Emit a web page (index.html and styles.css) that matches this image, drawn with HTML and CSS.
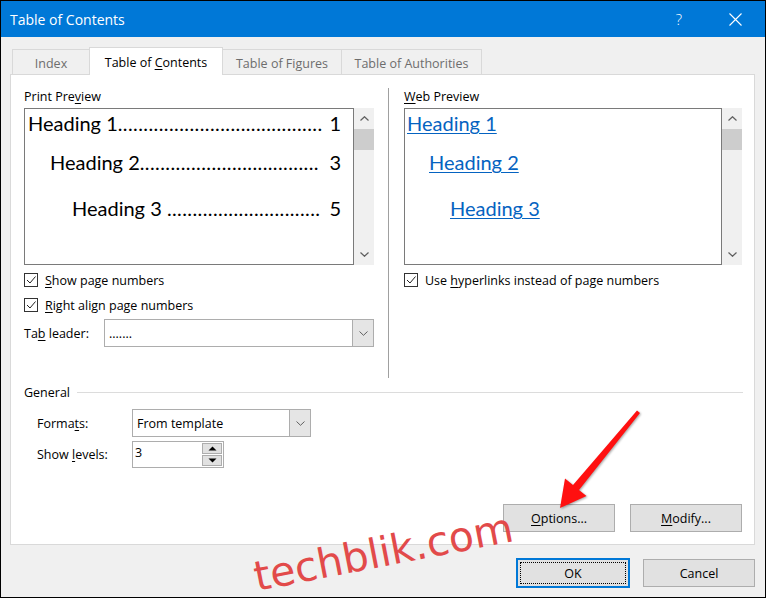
FILE: index.html
```html
<!DOCTYPE html>
<html>
<head>
<meta charset="utf-8">
<title>Table of Contents</title>
<link rel="stylesheet" href="styles.css">
</head>
<body>
<div class="window">
  <div class="titlebar">
    <span class="title">Table of Contents</span>
    <span class="help">?</span>
    <svg class="close" width="13" height="13" viewBox="0 0 13 13"><path d="M0.5 0.5 L12.5 12.5 M12.5 0.5 L0.5 12.5" stroke="#fff" stroke-width="1.1" fill="none"/></svg>
  </div>
  <div class="body">
    <div class="tabs">
      <div class="tab t-index"><span>Index</span></div>
      <div class="tab t-toc active"><span>Table of <u>C</u>ontents</span></div>
      <div class="tab t-fig"><span>Table of Figures</span></div>
      <div class="tab t-auth"><span>Table of Authorities</span></div>
    </div>
    <div class="panel">
      <div class="top">
        <div class="col left">
          <div class="label">Print Pre<u>v</u>iew</div>
          <div class="preview">
            <div class="pv-box print">
              <div class="toc-line l1"><span class="name">Heading 1</span><span class="dots">........................................</span><span class="num">1</span></div>
              <div class="toc-line l2"><span class="name">Heading 2</span><span class="dots">...................................</span><span class="num">3</span></div>
              <div class="toc-line l3"><span class="name">Heading 3&nbsp;</span><span class="dots">..............................</span><span class="num">5</span></div>
            </div>
            <div class="scrollbar">
              <div class="sb-arrow"><svg width="9" height="5" viewBox="0 0 9 5"><path d="M0.5 4.5 L4.5 0.7 L8.5 4.5" stroke="#606060" stroke-width="1.2" fill="none"/></svg></div>
              <div class="sb-thumb"></div>
              <div class="sb-space"></div>
              <div class="sb-arrow"><svg width="9" height="5" viewBox="0 0 9 5"><path d="M0.5 0.5 L4.5 4.3 L8.5 0.5" stroke="#606060" stroke-width="1.2" fill="none"/></svg></div>
            </div>
          </div>
          <div class="check first">
            <span class="box"><svg width="12" height="12" viewBox="0 0 12 12"><path d="M2 6 L5 9 L10.5 2.5" stroke="#222" stroke-width="1" fill="none"/></svg></span>
            <span><u>S</u>how page numbers</span>
          </div>
          <div class="check">
            <span class="box"><svg width="12" height="12" viewBox="0 0 12 12"><path d="M2 6 L5 9 L10.5 2.5" stroke="#222" stroke-width="1" fill="none"/></svg></span>
            <span><u>R</u>ight align page numbers</span>
          </div>
          <div class="leader-row">
            <span class="lead-label">Ta<u>b</u> leader:</span>
            <div class="select leader">
              <span class="val">.......</span>
              <span class="btn"><svg width="9" height="5" viewBox="0 0 9 5"><path d="M0.5 0.5 L4.5 4.3 L8.5 0.5" stroke="#606060" stroke-width="1" fill="none"/></svg></span>
            </div>
          </div>
        </div>
        <div class="vsep"></div>
        <div class="col right">
          <div class="label"><u>W</u>eb Preview</div>
          <div class="preview">
            <div class="pv-box web">
              <div class="toc-line l1"><span class="link">Heading 1</span></div>
              <div class="toc-line l2"><span class="link">Heading 2</span></div>
              <div class="toc-line l3"><span class="link">Heading 3</span></div>
            </div>
            <div class="scrollbar">
              <div class="sb-arrow"><svg width="9" height="5" viewBox="0 0 9 5"><path d="M0.5 4.5 L4.5 0.7 L8.5 4.5" stroke="#606060" stroke-width="1.2" fill="none"/></svg></div>
              <div class="sb-thumb"></div>
              <div class="sb-space"></div>
              <div class="sb-arrow"><svg width="9" height="5" viewBox="0 0 9 5"><path d="M0.5 0.5 L4.5 4.3 L8.5 0.5" stroke="#606060" stroke-width="1.2" fill="none"/></svg></div>
            </div>
          </div>
          <div class="check first">
            <span class="box"><svg width="12" height="12" viewBox="0 0 12 12"><path d="M2 6 L5 9 L10.5 2.5" stroke="#222" stroke-width="1" fill="none"/></svg></span>
            <span>Use <u>h</u>yperlinks instead of page numbers</span>
          </div>
        </div>
      </div>
      <div class="group-title"><span>General</span><div class="hline"></div></div>
      <div class="form-row formats">
        <span class="f-label">Forma<u>t</u>s:</span>
        <div class="select fmt">
          <span class="val">From template</span>
          <span class="btn"><svg width="9" height="5" viewBox="0 0 9 5"><path d="M0.5 0.5 L4.5 4.3 L8.5 0.5" stroke="#606060" stroke-width="1" fill="none"/></svg></span>
        </div>
      </div>
      <div class="form-row levels">
        <span class="f-label">Show <u>l</u>evels:</span>
        <div class="spinner">
          <span class="val">3</span>
          <span class="spin">
            <span class="sbtn"><svg width="9" height="5" viewBox="0 0 9 5"><path d="M0.5 4.5 L4.5 0.5 L8.5 4.5 Z" fill="#000"/></svg></span>
            <span class="sbtn"><svg width="9" height="5" viewBox="0 0 9 5"><path d="M0.5 0.5 L4.5 4.5 L8.5 0.5 Z" fill="#000"/></svg></span>
          </span>
        </div>
      </div>
      <div class="panel-buttons">
        <div class="button"><span><u>O</u>ptions...</span></div>
        <div class="button"><span><u>M</u>odify...</span></div>
      </div>
    </div>
    <div class="dialog-buttons">
      <div class="button ok"><span>OK</span></div>
      <div class="button"><span>Cancel</span></div>
    </div>
  </div>
  <svg class="overlay" width="766" height="598" viewBox="0 0 766 598">
    <polygon class="arrow" points="637,410.5 640,413 579,490 586.5,496 560,508 565,478.5 573,485"/>
    <text class="watermark" x="257" y="591" transform="rotate(-11 257 591)">techblik.com</text>
  </svg>
</div>
</body>
</html>
```
FILE: styles.css
```css
html, body {
  margin: 0;
  padding: 0;
}
body {
  width: 766px;
  height: 598px;
  overflow: hidden;
  font-family: "Open Sans", "Noto Sans", sans-serif;
  font-size: 12.5px;
  color: #000;
}
u { text-decoration-thickness: 1px; text-underline-offset: 2px; }

.window {
  position: relative;
  width: 766px;
  height: 598px;
  box-sizing: border-box;
  border: 1px solid #000;
  background: #f0f0f0;
  display: flex;
  flex-direction: column;
  overflow: hidden;
}

.titlebar {
  flex: none;
  height: 36px;
  background: #0078d7;
  color: #fff;
  display: flex;
  align-items: center;
  padding: 0 23px 0 9px;
}
.title { flex: 1; font-size: 14px; }
.help { font-size: 15px; margin-right: 47px; font-weight: 300; }
.close { display: block; }

.body {
  flex: 1;
  display: flex;
  flex-direction: column;
  padding: 10px 10px 9px 9px;
}

.tabs {
  display: flex;
  align-items: flex-end;
  height: 27px;
  margin-left: 2px;
  position: relative;
  z-index: 1;
}
.tab {
  box-sizing: border-box;
  height: 25px;
  border: 1px solid #d9d9d9;
  border-bottom: none;
  background: #f0f0f0;
  color: #6d6d6d;
  display: flex;
  align-items: center;
  justify-content: center;
  margin-left: -1px;
  padding-top: 2px;
  white-space: nowrap;
}
.tab.t-index { margin-left: 0; width: 78px; }
.tab.t-toc { width: 134px; }
.tab.t-fig { width: 120px; }
.tab.t-auth { width: 141px; }
.tab.active {
  height: 28px;
  margin-bottom: -1px;
  background: #fff;
  color: #000;
  padding-top: 2px;
}

.panel {
  box-sizing: border-box;
  height: 471px;
  background: #fff;
  border: 1px solid #d9d9d9;
  padding: 14px 11px 12px 13px;
  display: flex;
  flex-direction: column;
}

.top { display: flex; height: 289px; flex: none; }
.col { display: flex; flex-direction: column; }
.col.left { width: 350px; }
.col.right { width: 338px; }
.vsep { width: 1px; background: #a0a0a0; margin: -1px 15px 0 14px; }

.label { height: 16px; line-height: 16px; }

.preview { display: flex; height: 157px; margin-top: 3px; }
.pv-box {
  box-sizing: border-box;
  height: 157px;
  border: 1px solid #7a7a7a;
  background: #fff;
  font-family: "Lato", "Open Sans", sans-serif;
  font-size: 20px;
  padding-top: 2px;
}
.pv-box.print { width: 330px; padding-left: 3px; padding-right: 12px; }
.pv-box.web { width: 318px; padding-left: 2px; }

.toc-line { display: flex; height: 24px; line-height: 24px; white-space: nowrap; }
.toc-line.l2 { margin-top: 15px; padding-left: 22px; }
.toc-line.l3 { margin-top: 22px; padding-left: 44px; }
.pv-box.web .toc-line.l3 { padding-left: 43px; }
.toc-line .dots { letter-spacing: 0.4px; }
.toc-line .num { margin-left: auto; }
.link { color: #0563c1; text-decoration: underline; text-decoration-thickness: 1px; text-underline-offset: 2px; }

.scrollbar {
  width: 20px;
  background: #f0f0f0;
  display: flex;
  flex-direction: column;
}
.sb-arrow { height: 21px; display: flex; align-items: center; justify-content: center; }
.sb-thumb { height: 21px; background: #cdcdcd; }
.sb-space { flex: 1; }

.check { display: flex; align-items: center; height: 24px; }
.check.first { margin-top: 3px; }
.check + .check { margin-top: 1px; }
.check .box {
  box-sizing: border-box;
  width: 14px;
  height: 14px;
  border: 1px solid #333;
  background: #fff;
  margin-right: 7px;
  display: flex;
  align-items: center;
  justify-content: center;
}
.check .box svg { display: block; }

.leader-row { display: flex; align-items: center; margin-top: 2px; height: 28px; }
.lead-label { width: 80px; }

.select {
  box-sizing: border-box;
  display: flex;
  height: 28px;
  border: 1px solid #adadad;
  background: #fff;
}
.select .val { flex: 1; padding-left: 4px; display: flex; align-items: center; }
.select .btn {
  width: 20px;
  background: #e5e5e5;
  border-left: 1px solid #adadad;
  display: flex;
  align-items: center;
  justify-content: center;
}
.select.leader { width: 270px; }
.select.fmt { width: 179px; }

.group-title {
  display: flex;
  align-items: center;
  height: 16px;
  margin-top: 6px;
}
.hline { flex: 1; height: 1px; background: #dcdcdc; margin-left: 7px; }

.form-row { display: flex; align-items: center; padding-left: 13px; }
.form-row.formats { margin-top: 9px; height: 28px; }
.form-row.levels { margin-top: 4px; height: 27px; }
.f-label { width: 95px; }

.spinner {
  box-sizing: border-box;
  width: 92px;
  height: 27px;
  border: 1px solid #adadad;
  background: #fff;
  display: flex;
}
.spinner .val { flex: 1; padding-left: 2px; padding-bottom: 4px; display: flex; align-items: center; }
.spin { display: flex; flex-direction: column; width: 20px; padding: 1px 1px 1px 0; gap: 1px; }
.sbtn {
  flex: 1;
  box-sizing: border-box;
  border: 1px solid #adadad;
  background: #e1e1e1;
  display: flex;
  align-items: center;
  justify-content: center;
}
.sbtn svg { display: block; }

.panel-buttons {
  margin-top: auto;
  display: flex;
  justify-content: flex-end;
  gap: 15px;
  margin-right: 1px;
}
.button {
  box-sizing: border-box;
  width: 112px;
  height: 28px;
  background: #e1e1e1;
  border: 1px solid #adadad;
  display: flex;
  align-items: center;
  justify-content: center;
  position: relative;
}
.dialog-buttons {
  margin-top: 14px;
  display: flex;
  justify-content: flex-end;
  gap: 14px;
}
.button.ok {
  border: 1px solid #0078d7;
  outline: 1px solid #0078d7;
}
.button.ok::after {
  content: "";
  position: absolute;
  left: 2px;
  top: 2px;
  right: 2px;
  bottom: 2px;
  border: 1px dotted #000;
}

.overlay {
  position: absolute;
  left: -1px;
  top: -1px;
  pointer-events: none;
}
.arrow {
  fill: #ff1010;
  filter: drop-shadow(1px 1px 1px rgba(0,0,0,0.35));
}
.watermark {
  font-family: "DejaVu Sans", sans-serif;
  font-size: 41px;
  fill: #e24a4a;
}
```
